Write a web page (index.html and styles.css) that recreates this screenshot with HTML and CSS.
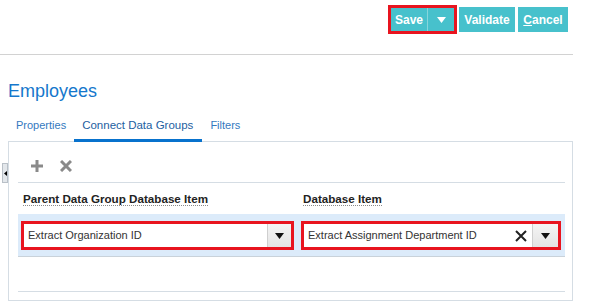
FILE: index.html
```html
<!DOCTYPE html>
<html lang="en">
<head>
    <meta charset="UTF-8">
    <title>Employees - Connect Data Groups</title>
    <link rel="stylesheet" href="styles.css">
</head>
<body>

<div class="topbar">
    <div class="btn-split marked">
        <button class="btn btn-main">Save</button>
        <button class="btn btn-caret">
            <svg width="9" height="6" viewBox="0 0 9 6"><path d="M0 0h9L4.5 6z" fill="#fff"/></svg>
        </button>
    </div>
    <button class="btn btn-validate">Validate</button>
    <button class="btn btn-cancel"><u>C</u>ancel</button>
</div>

<div class="page">
    <h1 class="title">Employees</h1>

    <div class="tabs">
        <a class="tab">Properties</a>
        <a class="tab active">Connect Data Groups</a>
        <a class="tab">Filters</a>
    </div>

    <div class="panel">
        <span class="handle">
            <svg width="3" height="5" viewBox="0 0 3 5"><path d="M3 0v5L0 2.5z" fill="#000"/></svg>
        </span>

        <!-- toolbar -->
        <div class="toolbar">
            <svg class="tool" width="12" height="12" viewBox="0 0 12 12">
                <path d="M6 0v12M0 6h12" stroke="#8a8a8a" stroke-width="3"/>
            </svg>
            <svg class="tool" width="12" height="12" viewBox="0 0 12 12">
                <path d="M1 1l10 10M11 1L1 11" stroke="#8a8a8a" stroke-width="3"/>
            </svg>
        </div>

        <div class="grid-head">
            <div class="col col-parent"><span class="head-text">Parent Data Group Database Item</span></div>
            <div class="col col-item"><span class="head-text">Database Item</span></div>
        </div>

        <div class="grid-row">
            <div class="col col-parent">
                <div class="select select-parent marked">
                    <span class="select-text">Extract Organization ID</span>
                    <span class="select-btn">
                        <svg width="9" height="6" viewBox="0 0 9 6"><path d="M0 0h9L4.5 6z" fill="#111"/></svg>
                    </span>
                </div>
            </div>
            <div class="col col-item">
                <div class="select select-item marked">
                    <span class="select-text">Extract Assignment Department ID</span>
                    <svg class="clear" width="12" height="12" viewBox="0 0 12 12">
                        <path d="M1 1l10 10M11 1L1 11" stroke="#222" stroke-width="2"/>
                    </svg>
                    <span class="select-btn">
                        <svg width="9" height="6" viewBox="0 0 9 6"><path d="M0 0h9L4.5 6z" fill="#111"/></svg>
                    </span>
                </div>
            </div>
        </div>

        <div class="grid-foot"></div>
    </div>
</div>

</body>
</html>
```

FILE: styles.css
```css
body {
    margin: 0;
    font-family: "Liberation Sans", Arial, sans-serif;
    color: #333;
    background: #fff;
}
.topbar {
    width: 573px;
    height: 55px;
    box-sizing: border-box;
    padding: 7px 5px 0 0;
    display: flex;
    justify-content: flex-end;
    align-items: flex-start;
    border-bottom: 1px solid #d2d2d2;
}
.btn {
    height: 25px;
    border: none;
    margin: 0;
    padding: 0 5px;
    background-color: #47c1cc;
    color: #fff;
    font-family: "Liberation Sans", Arial, sans-serif;
    font-size: 12px;
    font-weight: bold;
    cursor: pointer;
}
.btn-split {
    display: flex;
}
.btn-main {
    width: 38px;
    border-right: 1px solid #86d6dc;
}
.btn-caret {
    width: 27px;
    display: flex;
    align-items: center;
    justify-content: center;
}
.btn-validate {
    width: 56px;
    margin-left: 4px;
}
.btn-cancel {
    width: 50px;
    margin-left: 3px;
}
.marked {
    outline: 3px solid #e8141f;
    outline-offset: -1px;
}
.page {
    padding-left: 8px;
}
.title {
    margin: 26px 0 0 0;
    font-size: 18px;
    line-height: 21px;
    font-weight: normal;
    color: #1577cc;
}
.tabs {
    display: flex;
    margin-top: 17px;
    position: relative;
    z-index: 1;
}
.tab {
    padding: 0 8px 7px;
    font-size: 11px;
    line-height: 13px;
    color: #3479c0;
    border-bottom: 3px solid transparent;
    cursor: pointer;
}
.tab.active {
    font-size: 11.5px;
    padding-right: 9px;
    color: #23609f;
    border-bottom-color: #0872cd;
}
.panel {
    position: relative;
    width: 565px;
    box-sizing: border-box;
    margin-top: -1px;
    padding: 0 7px 8px 9px;
    border: 1px solid #d5dde4;
}
.handle {
    position: absolute;
    left: -7px;
    top: 21px;
    width: 4px;
    height: 18px;
    background: #e3e7eb;
    border: 1px solid #b9c0c7;
    display: flex;
    align-items: center;
    justify-content: center;
}
.toolbar {
    display: flex;
    align-items: center;
    gap: 17px;
    padding: 18px 0 10px 13px;
    border-bottom: 1px solid #d5dde4;
}
.tool {
    display: block;
}
.grid-head {
    display: flex;
    padding: 6px 0 7px;
}
.col-parent {
    width: 280px;
    padding-left: 5px;
    box-sizing: border-box;
}
.col-item {
    padding-left: 5px;
}
.head-text {
    display: inline-block;
    font-size: 11.65px;
    line-height: 13px;
    font-weight: bold;
    color: #222;
    border-bottom: 1px dotted #8a8a8a;
}
.grid-row {
    display: flex;
    background-color: #dcebfa;
    padding: 9px 0 8px;
    border-bottom: 1px solid #c9d2da;
}
.select {
    height: 25px;
    box-sizing: border-box;
    display: flex;
    align-items: stretch;
    background: #fff;
    border: 1px solid #c4c4c4;
}
.select-parent {
    width: 269px;
}
.select-item {
    width: 256px;
}
.select-text {
    flex: 1;
    padding-left: 4px;
    font-size: 11px;
    line-height: 23px;
    color: #333;
    white-space: nowrap;
}
.clear {
    align-self: center;
    margin-right: 5px;
}
.select-btn {
    width: 23px;
    display: flex;
    align-items: center;
    justify-content: center;
    border-left: 1px solid #cfcfcf;
    background: linear-gradient(#f4f4f4, #e4e4e4);
}
.select-item .select-btn {
    width: 25px;
}
.grid-foot {
    height: 34px;
    border-bottom: 1px solid #d5dde4;
}
```
